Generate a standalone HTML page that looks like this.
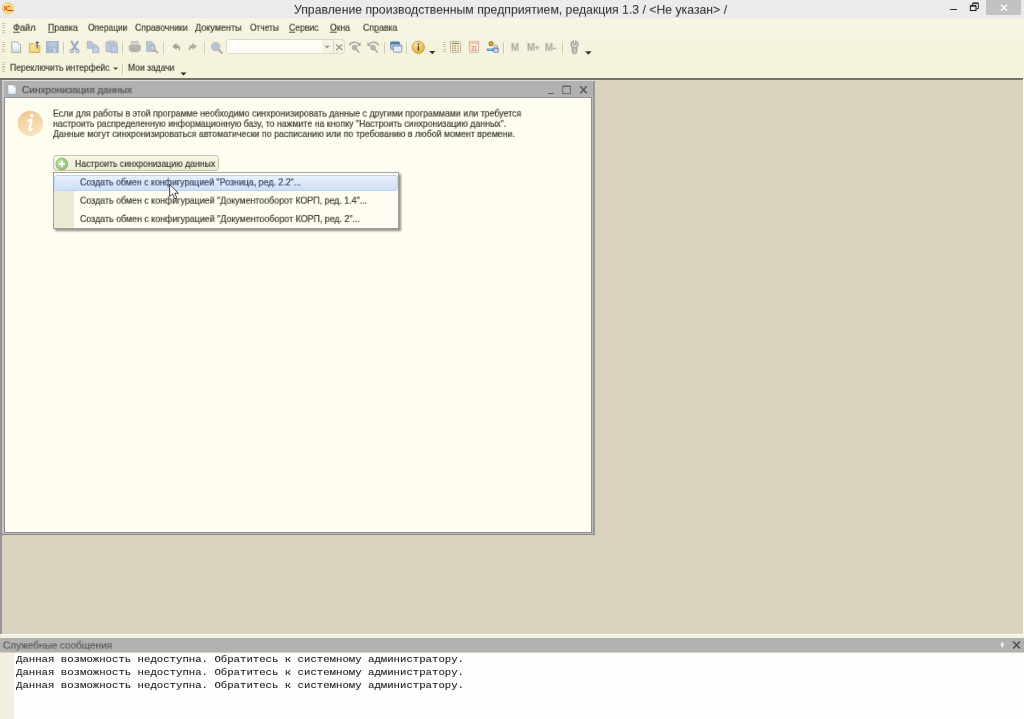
<!DOCTYPE html>
<html lang="ru">
<head>
<meta charset="utf-8">
<title>1C</title>
<style>
*{box-sizing:border-box;margin:0;padding:0}
html,body{width:1024px;height:719px;overflow:hidden}
body{position:relative;background:#d9d3be;font-family:"Liberation Sans",sans-serif}
.a{position:absolute}
.tx{position:absolute;-webkit-text-stroke:0.2px currentColor;will-change:transform;line-height:1;white-space:nowrap;transform-origin:0 0;font-family:"Liberation Sans",sans-serif}
.tx.mono{font-family:"Liberation Mono",monospace;white-space:pre;-webkit-text-stroke:0.1px currentColor}
.tx u{text-decoration:underline;text-underline-offset:1px}
svg{position:absolute;overflow:visible}
.grip{position:absolute;width:3px;height:11px;background:repeating-linear-gradient(to bottom,#cbc6b0 0,#cbc6b0 1.1px,rgba(0,0,0,0) 1.1px,rgba(0,0,0,0) 2.2px)}
.sep{position:absolute;width:1px;height:14.5px;margin-top:-0.5px;background:linear-gradient(rgba(208,203,182,0),#d0cbb6 15%,#d0cbb6 85%,rgba(208,203,182,0));box-shadow:1px 0 0 rgba(252,250,240,.7)}

</style>
</head>
<body>
<!-- window title bar -->
<div class="a" style="left:0;top:0;width:1024px;height:18px;background:#ebebeb"></div>
<div class="a" style="left:0;top:17px;width:1024px;height:1px;background:#e6e6e3"></div>
<div class="a" style="left:985.7px;top:0;width:35.8px;height:14.7px;background:#c2c2c2"></div>
<div class="a" style="left:950px;top:8.8px;width:7px;height:1.7px;background:#2a2a2a"></div>
<!-- toolbars -->
<div class="a" style="left:0;top:18px;width:1024px;height:61px;background:linear-gradient(#f7f5e4,#f5f2de 40%)"></div>
<div class="a" style="left:0;top:78.4px;width:1022.6px;height:1.6px;background:#74726b"></div>
<div class="grip" style="left:2px;top:23px"></div>
<div class="grip" style="left:2px;top:41.5px"></div>
<div class="grip" style="left:2px;top:62px"></div>
<div class="grip" style="left:442.5px;top:41.5px"></div>
<div class="sep" style="left:63px;top:41px"></div>
<div class="sep" style="left:122px;top:41px"></div>
<div class="sep" style="left:163px;top:41px"></div>
<div class="sep" style="left:204px;top:41px"></div>
<div class="sep" style="left:384px;top:41px"></div>
<div class="sep" style="left:406px;top:41px"></div>
<div class="sep" style="left:503px;top:41px"></div>
<div class="sep" style="left:562px;top:41px"></div>
<div class="sep" style="left:122px;top:62px"></div>
<!-- search box -->
<div class="a" style="left:225.5px;top:38.9px;width:119.8px;height:15.2px;border:1px solid #dedac6;border-radius:3px;background:#f7f3e2"></div>
<div class="a" style="left:226.5px;top:39.9px;width:95px;height:13.2px;border-radius:2px 0 0 2px;background:#fffdf6"></div>
<div class="a" style="left:333px;top:39.9px;width:1px;height:13.2px;background:#ddd8c4"></div>
<!-- MDI area -->
<div class="a" style="left:0;top:80px;width:1024px;height:554px;background:#d9d3be"></div>
<div class="a" style="left:0;top:80px;width:1.8px;height:554px;background:#949494"></div>
<!-- child window -->
<div class="a" style="left:1.8px;top:80px;width:592.9px;height:454.8px;background:#b1b1b1"></div>
<div class="a" style="left:1.8px;top:80px;width:592.9px;height:1px;background:#dcdcdc"></div>
<div class="a" style="left:1.8px;top:81px;width:1.9px;height:452.8px;background:#c5c5c5"></div>
<div class="a" style="left:3.7px;top:96.7px;width:1.3px;height:436px;background:#8c8c8c"></div>
<div class="a" style="left:3.7px;top:96.7px;width:588px;height:1.1px;background:#969696"></div>
<div class="a" style="left:590.7px;top:96.7px;width:1.1px;height:436px;background:#8e8e8e"></div>
<div class="a" style="left:591.8px;top:97px;width:1.4px;height:436.8px;background:#b9b9b9"></div>
<div class="a" style="left:593.2px;top:81px;width:1.5px;height:453.8px;background:#9a9a96"></div>
<div class="a" style="left:3.7px;top:531.8px;width:588px;height:1px;background:#8a8a8a"></div>
<div class="a" style="left:1.8px;top:532.8px;width:591.4px;height:1px;background:#c0c0c0"></div>
<div class="a" style="left:1.8px;top:533.8px;width:592.9px;height:1px;background:#86857d"></div>
<div class="a" style="left:5px;top:97.8px;width:585.7px;height:434px;background:#fffcf1;border-top:1px solid #fffefb;border-left:1px solid #fffefb;border-bottom:1px solid #fffefb"></div>
<!-- button -->
<div class="a" style="left:53px;top:155.2px;width:165.5px;height:16px;border:1px solid #c9c4a8;border-radius:3px;background:linear-gradient(#f9f6e6,#efead3)"></div>
<!-- popup -->
<div class="a" style="left:53px;top:172.4px;width:346px;height:56.2px;background:#fffcf2;border:1px solid #a3a29a;box-shadow:1.5px 1.5px 2px rgba(60,60,50,.55)"></div>
<div class="a" style="left:54px;top:190.4px;width:19.5px;height:37.2px;background:#ede8d2"></div>
<div class="a" style="left:54px;top:175px;width:343.5px;height:15.5px;border:1px solid #bfd4f0;border-radius:2.5px;background:linear-gradient(#e9f1fc,#cddff7)"></div>
<!-- messages -->
<div class="a" style="left:1022.6px;top:79px;width:1.4px;height:556px;background:#fdfdf7"></div>
<div class="a" style="left:0;top:633.7px;width:1024px;height:1.2px;background:#fdfdf6"></div>
<div class="a" style="left:0;top:634.8px;width:1024px;height:3.4px;background:#f4f2df"></div>
<div class="a" style="left:0;top:638.1px;width:1024px;height:14.4px;background:#b1b1b1"></div>
<div class="a" style="left:0;top:652.5px;width:1024px;height:66.5px;background:#fefefe"></div>
<div class="a" style="left:0;top:652.5px;width:14.2px;height:66.5px;background:#f3f0e0"></div>

<!-- 1C logo -->
<svg style="left:0;top:0" width="20" height="18" viewBox="0 0 20 18">
<defs><radialGradient id="lg" cx="0.42" cy="0.36" r="0.62"><stop offset="0" stop-color="#fff3b8"/><stop offset="0.6" stop-color="#fbd868"/><stop offset="1" stop-color="#f4d982"/></radialGradient></defs>
<circle cx="8" cy="8.4" r="5.9" fill="url(#lg)" stroke="#e6d7a8" stroke-width="0.8"/>
<path d="M3.7 7.5 L4.5 6 H5.5 V10.6 H4.3 V7.5 Z" fill="#c8620f"/>
<path d="M10 7.1 A2 2.1 0 1 0 8.5 10.4 L13.4 10.4" fill="none" stroke="#d63a10" stroke-width="1.05"/>
</svg>
<!-- window controls -->
<svg style="left:968px;top:1px" width="14" height="12" viewBox="0 0 14 12">
<path d="M4.6 4.6 V2.4 H10.4 V7.6 H8.2" fill="none" stroke="#333" stroke-width="1"/>
<path d="M4.6 2.1 H10.4" stroke="#333" stroke-width="1.4"/>
<rect x="2.4" y="4.9" width="5.6" height="4.6" fill="none" stroke="#222" stroke-width="1.1"/>
<path d="M2.4 4.7 H8" stroke="#222" stroke-width="1.5"/>
</svg>
<svg style="left:1000px;top:4px" width="9" height="8" viewBox="0 0 9 8">
<path d="M1 0.7 L7 6.7 M7 0.7 L1 6.7" stroke="#fff" stroke-width="1.3" fill="none"/>
</svg>

<!-- toolbar row 2 -->
<!-- new -->
<svg style="left:10px;top:40px" width="13" height="14" viewBox="0 0 13 14">
<defs><linearGradient id="nd" x1="0" y1="0" x2="0" y2="1"><stop offset="0.2" stop-color="#ffffff"/><stop offset="1" stop-color="#c9dcee"/></linearGradient></defs>
<path d="M1.8 2 H8 L10.6 4.6 V12.4 H1.8 Z" fill="url(#nd)" stroke="#a9aaa8" stroke-width="1"/>
<path d="M8 2 V4.6 H10.6" fill="#eef2f6" stroke="#b9bbbb" stroke-width="0.8"/>
</svg>
<!-- open -->
<svg style="left:28px;top:40px" width="14" height="14" viewBox="0 0 14 14">
<defs><linearGradient id="fo" x1="0" y1="0" x2="0" y2="1"><stop offset="0" stop-color="#f9e8a6"/><stop offset="1" stop-color="#f2d16c"/></linearGradient></defs>
<path d="M1.4 3.6 H5.6 L7.4 5.6 H11.8 V12.5 H1.4 Z" fill="url(#fo)" stroke="#cfae55" stroke-width="0.9"/>
<path d="M9.2 8.4 V2.6" stroke="#5f6e68" stroke-width="1.3"/>
<path d="M6.9 3.3 L9.2 0.9 L11.5 3.3 Z" fill="#55645f"/>
</svg>
<!-- save (disabled) -->
<svg style="left:46px;top:40px" width="14" height="14" viewBox="0 0 14 14">
<rect x="0.6" y="1.5" width="11.6" height="11.2" fill="#a9b8cf" stroke="#9eaec7" stroke-width="0.8"/>
<rect x="2.6" y="2" width="7.6" height="4.6" fill="#b7c7d8"/>
<rect x="3.4" y="8.2" width="6.6" height="4.2" fill="#c6cfdc"/>
<rect x="4.4" y="9.2" width="2" height="2.6" fill="#8f9fb8"/>
</svg>
<!-- cut -->
<svg style="left:69px;top:40px" width="12" height="14" viewBox="0 0 12 14">
<path d="M2.7 1.8 L7.6 9.6 M8.7 1.8 L3.8 9.6" stroke="#a3aec2" stroke-width="2.3" fill="none" stroke-linecap="round"/>
<rect x="1.5" y="9.4" width="2.8" height="3.2" rx="0.9" fill="#dfe1de" stroke="#a3aec2" stroke-width="1.2"/>
<rect x="7.1" y="9.4" width="2.8" height="3.2" rx="0.9" fill="#dfe1de" stroke="#a3aec2" stroke-width="1.2"/>
</svg>
<!-- copy -->
<svg style="left:86px;top:40px" width="14" height="14" viewBox="0 0 14 14">
<path d="M1.3 1.3 H5 L7.2 3.5 V8.3 H1.3 Z" fill="#b9c5d7" stroke="#a8b4c8" stroke-width="0.9"/>
<path d="M6.6 5 H10.4 L12.8 7.4 V12.6 H6.6 Z" fill="#b9c5d7" stroke="#a8b4c8" stroke-width="0.9"/>
<rect x="8" y="8" width="3.4" height="3.4" fill="#c5d4e6"/>
</svg>
<!-- paste -->
<svg style="left:105px;top:40px" width="14" height="14" viewBox="0 0 14 14">
<rect x="1.1" y="1.9" width="10.6" height="9.8" rx="0.8" fill="#bcc7d8" stroke="#a9b4c6" stroke-width="0.9"/>
<rect x="4.2" y="1" width="4.6" height="2.2" fill="#d6d8d2" stroke="#a9b0b8" stroke-width="0.7"/>
<rect x="6" y="5.9" width="6.6" height="6.8" fill="#bccbe0" stroke="#a9b4c6" stroke-width="0.9"/>
</svg>
<!-- print -->
<svg style="left:128px;top:40px" width="14" height="14" viewBox="0 0 14 14">
<rect x="3.6" y="1.6" width="6.6" height="4.4" fill="#cfd3d6" stroke="#b9bab4" stroke-width="0.7"/>
<rect x="0.9" y="4.8" width="12" height="6.2" rx="1.6" fill="#b7b5aa"/>
<rect x="3.2" y="8.6" width="7.4" height="3.2" fill="#c9c7bc" stroke="#a9a79c" stroke-width="0.7"/>
<rect x="4.4" y="9.6" width="5" height="1" fill="#98968c"/>
</svg>
<!-- preview -->
<svg style="left:145px;top:40px" width="15" height="14" viewBox="0 0 15 14">
<path d="M1.5 1.6 H6.8 L9.4 4.2 V11.5 H1.5 Z" fill="#b7c6d8" stroke="#a9b7ca" stroke-width="0.8"/>
<circle cx="7.6" cy="7.9" r="2.7" fill="#c3d2e4" stroke="#aaa89e" stroke-width="1"/>
<path d="M9.6 9.9 L12.6 12.6" stroke="#b5ab9c" stroke-width="1.7" stroke-linecap="round"/>
</svg>
<!-- undo -->
<svg style="left:171px;top:41px" width="11" height="12" viewBox="0 0 11 12">
<path d="M1.2 5.4 L5.6 1.8 V4 C8.6 4 9.8 6.6 9 10.6 C8.4 8 7.4 6.9 5.6 6.9 V9 Z" fill="#9dab96"/>
</svg>
<!-- redo -->
<svg style="left:187px;top:41px" width="11" height="12" viewBox="0 0 11 12">
<path d="M9.8 5.4 L5.4 1.8 V4 C2.4 4 1.2 6.6 2 10.6 C2.6 8 3.6 6.9 5.4 6.9 V9 Z" fill="#a7b3a0"/>
</svg>
<!-- search magnifier -->
<svg style="left:210px;top:41px" width="14" height="14" viewBox="0 0 14 14">
<circle cx="5.6" cy="5.6" r="4.2" fill="#b6c3d8" stroke="#b4b8bc" stroke-width="0.9"/>
<path d="M8.8 8.8 L12 12" stroke="#b8ae9e" stroke-width="2" stroke-linecap="round"/>
</svg>
<!-- search dropdown + clear -->
<svg style="left:322px;top:41px" width="22" height="12" viewBox="0 0 22 12">
<path d="M2.4 4.8 H7.8 L5.1 7.5 Z" fill="#98958a"/>
<path d="M14.2 3.4 L20.2 9 M20.2 3.4 L14.2 9" stroke="#9b988e" stroke-width="1.35" fill="none"/>
</svg>
<!-- find next -->
<svg style="left:348px;top:40px" width="14" height="14" viewBox="0 0 14 14">
<path d="M1.4 5.4 C3 1.6 9 1.2 11.4 4.6" fill="none" stroke="#a9a9a1" stroke-width="1.5"/>
<path d="M12.6 2.2 V6 H8.8 Z" fill="#a9a9a1"/>
<circle cx="6.6" cy="7.6" r="2.3" fill="#b9b9b4" stroke="#a6a6a0" stroke-width="1"/>
<path d="M8.4 9.4 L10.8 12" stroke="#b0aa9c" stroke-width="1.7" stroke-linecap="round"/>
</svg>
<!-- find prev -->
<svg style="left:366px;top:40px" width="14" height="14" viewBox="0 0 14 14">
<path d="M12.6 5.4 C11 1.6 5 1.2 2.6 4.6" fill="none" stroke="#a9a9a1" stroke-width="1.5"/>
<path d="M1.4 2.2 V6 H5.2 Z" fill="#a9a9a1"/>
<circle cx="7" cy="7.6" r="2.3" fill="#b9b9b4" stroke="#a6a6a0" stroke-width="1"/>
<path d="M8.8 9.4 L11.2 12" stroke="#b0aa9c" stroke-width="1.7" stroke-linecap="round"/>
</svg>
<!-- windows -->
<svg style="left:389px;top:40px" width="14" height="14" viewBox="0 0 14 14">
<rect x="1.6" y="1.9" width="9" height="7.4" rx="0.8" fill="#a9bcd6" stroke="#6f8cb3" stroke-width="0.9"/>
<rect x="1.6" y="1.9" width="9" height="2.2" fill="#557aa8"/>
<rect x="4.4" y="5" width="8.4" height="7.2" rx="0.8" fill="#e3ebf5" stroke="#7c97bc" stroke-width="0.9"/>
<rect x="4.6" y="5" width="8" height="1.6" fill="#8fa9cb"/>
</svg>
<!-- info -->
<svg style="left:411px;top:40px" width="15" height="15" viewBox="0 0 15 15">
<defs><radialGradient id="ig" cx="0.4" cy="0.3" r="0.8"><stop offset="0" stop-color="#fbe9b4"/><stop offset="0.6" stop-color="#f0bb5a"/><stop offset="1" stop-color="#e09c36"/></radialGradient></defs>
<circle cx="7.3" cy="7.3" r="6.2" fill="url(#ig)" stroke="#cf9740" stroke-width="0.8"/>
<rect x="6.6" y="5.7" width="1.5" height="5" fill="#4a5420"/>
<rect x="6.6" y="3.3" width="1.5" height="1.6" fill="#4a5420"/>
</svg>
<svg style="left:429px;top:50px" width="7" height="5" viewBox="0 0 7 5"><path d="M0.2 0.9 H6.4 L3.3 4.2 Z" fill="#3a3222"/></svg>
<!-- calculator -->
<svg style="left:449px;top:40px" width="13" height="14" viewBox="0 0 13 14">
<rect x="1.5" y="1.4" width="10" height="11" rx="0.8" fill="#f8f0dc" stroke="#b9b19c" stroke-width="0.9"/>
<rect x="3" y="2.8" width="7" height="1.3" fill="#7c9c46"/>
<g fill="#6b7240"><rect x="3.2" y="5.4" width="1.2" height="1.1"/><rect x="5.6" y="5.4" width="1.2" height="1.1"/><rect x="3.2" y="7.6" width="1.2" height="1.1"/><rect x="5.6" y="7.6" width="1.2" height="1.1"/><rect x="3.2" y="9.8" width="1.2" height="1.1"/><rect x="5.6" y="9.8" width="1.2" height="1.1"/></g>
<g fill="#d99a58"><rect x="7.8" y="5.5" width="2.2" height="0.9"/><rect x="7.8" y="7.7" width="2.2" height="0.9"/><rect x="7.8" y="9.9" width="2.2" height="0.9"/></g>
</svg>
<!-- calendar -->
<svg style="left:468px;top:40px" width="12" height="14" viewBox="0 0 12 14">
<rect x="1.4" y="1.4" width="9.2" height="11" rx="0.6" fill="#fbe9dd" stroke="#cbb09a" stroke-width="0.9"/>
<rect x="1.8" y="1.8" width="8.4" height="1.9" fill="#e9b98c"/>
<rect x="3.2" y="1.6" width="1" height="1.5" fill="#fff"/><rect x="5.5" y="1.6" width="1" height="1.5" fill="#fff"/><rect x="7.8" y="1.6" width="1" height="1.5" fill="#fff"/>
<text x="2.9" y="10.7" font-family="Liberation Sans, sans-serif" font-size="7.4" textLength="6.2" lengthAdjust="spacingAndGlyphs" fill="#e2603c">31</text>
</svg>
<!-- user + lock -->
<svg style="left:486px;top:40px" width="14" height="14" viewBox="0 0 14 14">
<circle cx="5.1" cy="3.7" r="2.2" fill="#dda136" stroke="#8f6f28" stroke-width="0.9"/>
<rect x="0.9" y="8.4" width="6.6" height="2.5" rx="0.8" fill="#3b8fd6"/>
<rect x="2.6" y="8.9" width="3" height="1.1" fill="#a8d4f2"/>
<path d="M8.3 8 V6.9 A1.6 1.6 0 0 1 11.5 6.9 V8" fill="none" stroke="#98a4b2" stroke-width="1.1"/>
<rect x="7.3" y="7.8" width="5.1" height="4.7" rx="0.7" fill="#8d9bab" stroke="#7f8c9c" stroke-width="0.6"/>
<path d="M9 12 V9.8 H10.8 V12" fill="none" stroke="#fff" stroke-width="0.9"/>
</svg>
<!-- M, M+, M- -->
<div class="tx" style="left:510.6px;top:42.6px;font-size:10px;font-weight:bold;color:#b3ad9f;transform:scaleX(0.95)">M</div>
<div class="tx" style="left:526.8px;top:42.6px;font-size:10px;font-weight:bold;color:#b3ad9f;transform:scaleX(0.95)">M<span style="font-size:8.5px;position:relative;top:-0.3px">+</span></div>
<div class="tx" style="left:545.3px;top:42.6px;font-size:10px;font-weight:bold;color:#b3ad9f;transform:scaleX(0.95)">M<span style="position:relative;top:-0.5px">-</span></div>
<!-- wrench -->
<svg style="left:569px;top:40px" width="11" height="15" viewBox="0 0 11 15">
<rect x="3.2" y="5.6" width="4.6" height="8" rx="2.2" fill="#d9d9d2" stroke="#8d8d86" stroke-width="0.95"/>
<path d="M4.3 0.9 A3.7 3.7 0 1 0 6.7 0.9 V4.2 H4.3 Z" fill="#cfcfc8" stroke="#92928b" stroke-width="0.95" stroke-linejoin="round"/>
<rect x="5" y="8" width="1" height="4" rx="0.5" fill="#f5f2de" stroke="#9a9a93" stroke-width="0.6"/>
</svg>
<svg style="left:585px;top:51px" width="7" height="5" viewBox="0 0 7 5"><path d="M0.1 0.3 H6.6 L3.35 3.7 Z" fill="#3a3222"/></svg>

<!-- row 3 arrows -->
<svg style="left:113px;top:67px" width="6" height="4" viewBox="0 0 6 4"><path d="M0.3 0.4 H5.1 L2.7 2.9 Z" fill="#4a4638"/></svg>
<svg style="left:180px;top:71.5px" width="7" height="5" viewBox="0 0 7 5"><path d="M0.5 0.6 H6.5 L3.5 3.6 Z" fill="#2e281c"/></svg>

<!-- child window doc icon -->
<svg style="left:7px;top:84px" width="11" height="12" viewBox="0 0 11 12">
<defs><linearGradient id="cd" x1="0" y1="0" x2="0" y2="1"><stop offset="0.3" stop-color="#ffffff"/><stop offset="1" stop-color="#d8e4f0"/></linearGradient></defs>
<path d="M0.8 0.8 H6.6 L9.2 3.2 V10.4 H0.8 Z" fill="url(#cd)" stroke="#a0a5aa" stroke-width="0.9"/>
<path d="M6.6 0.8 V3.2 H9.2" fill="#e6ebf0" stroke="#c4c8cc" stroke-width="0.6"/>
</svg>
<!-- child window controls -->
<div class="a" style="left:548px;top:93px;width:6px;height:1.3px;background:#5e5e5e"></div>
<svg style="left:561px;top:85px" width="11" height="10" viewBox="0 0 11 10">
<rect x="1.7" y="1.4" width="7.8" height="7.2" fill="none" stroke="#6b6b6b" stroke-width="0.9"/>
<path d="M1.7 1.3 H9.5" stroke="#606060" stroke-width="1.3"/>
</svg>
<svg style="left:579px;top:85px" width="9" height="10" viewBox="0 0 9 10">
<path d="M1.3 1.2 L7.7 8.2 M7.7 1.2 L1.3 8.2" stroke="#555" stroke-width="1.45" fill="none"/>
</svg>

<!-- big info -->
<svg style="left:17px;top:110px" width="27" height="27" viewBox="0 0 27 27">
<defs><linearGradient id="bi" x1="0" y1="0" x2="0.3" y2="1"><stop offset="0" stop-color="#f0c98e"/><stop offset="1" stop-color="#f7e2bd"/></linearGradient></defs>
<circle cx="13.3" cy="13.4" r="12.6" fill="url(#bi)"/>
<path d="M11.6 10.6 C12.6 10 13.6 10 14.4 10.2 L12.5 18.6 C12.3 19.9 13.4 20 14.6 19" fill="none" stroke="#fffdf6" stroke-width="2.5" stroke-linecap="round" stroke-linejoin="round"/>
<circle cx="14.7" cy="5.8" r="1.8" fill="#fffdf6"/>
</svg>
<!-- green plus -->
<svg style="left:54.5px;top:157px" width="14" height="14" viewBox="0 0 14 14">
<defs><radialGradient id="gp" cx="0.4" cy="0.35" r="0.75"><stop offset="0" stop-color="#c9e6b2"/><stop offset="1" stop-color="#7fba68"/></radialGradient></defs>
<circle cx="6.8" cy="7" r="5.9" fill="url(#gp)" stroke="#8fb77b" stroke-width="0.9"/>
<path d="M6.8 3.7 V10.3 M3.5 7 H10.1" stroke="#ffffff" stroke-width="1.6"/>
</svg>

<!-- mouse cursor -->
<svg style="left:167.6px;top:183.3px" width="14" height="18.6" viewBox="0 0 12 16">
<path d="M1.4 1.2 V11.6 L3.8 9.4 L5.8 13.6 L7.6 12.8 L5.7 8.8 H9 Z" fill="#fdfdfd" stroke="#3a3f4a" stroke-width="0.85" stroke-linejoin="miter"/>
</svg>

<!-- message panel pin + close -->
<svg style="left:1000px;top:641px" width="5" height="8" viewBox="0 0 5 8">
<ellipse cx="2.3" cy="3.4" rx="1.5" ry="2.5" fill="#ececec"/><rect x="2" y="5" width="0.8" height="2" fill="#e0e0e0"/>
</svg>
<svg style="left:1012px;top:640px" width="10" height="10" viewBox="0 0 10 10">
<path d="M1.1 1.5 L8 8.6 M8 1.5 L1.1 8.6" stroke="#4b4b4b" stroke-width="1.4" fill="none"/>
</svg>

<div id="title" class="tx" style="left:294.0px;top:4px;font-size:12px;color:#333333;transform:translateY(0.03px) scale(1.0196,0.967);-webkit-text-stroke:0.05px currentColor">Управление производственным предприятием, редакция 1.3 / &lt;Не указан&gt; /</div>
<div id="m1" class="tx" style="left:12.7px;top:23px;font-size:10.1px;color:#3e3a2c;transform:translateY(0.68px) scale(0.9057,0.89);"><u>Ф</u>айл</div>
<div id="m2" class="tx" style="left:47.9px;top:23px;font-size:10.1px;color:#3e3a2c;transform:translateY(0.68px) scale(0.8737,0.89);"><u>П</u>равка</div>
<div id="m3" class="tx" style="left:87.9px;top:23px;font-size:10.1px;color:#3e3a2c;transform:translateY(0.68px) scale(0.8344,0.89);">Операции</div>
<div id="m4" class="tx" style="left:134.8px;top:23px;font-size:10.1px;color:#3e3a2c;transform:translateY(0.68px) scale(0.8617,0.89);">Справочники</div>
<div id="m5" class="tx" style="left:195.4px;top:23px;font-size:10.1px;color:#3e3a2c;transform:translateY(0.68px) scale(0.8953,0.89);"><u>Д</u>окументы</div>
<div id="m6" class="tx" style="left:249.7px;top:23px;font-size:10.1px;color:#3e3a2c;transform:translateY(0.68px) scale(0.8254,0.89);">Отчеты</div>
<div id="m7" class="tx" style="left:288.8px;top:23px;font-size:10.1px;color:#3e3a2c;transform:translateY(0.68px) scale(0.8531,0.89);"><u>С</u>ервис</div>
<div id="m8" class="tx" style="left:330.1px;top:23px;font-size:10.1px;color:#3e3a2c;transform:translateY(0.68px) scale(0.8522,0.89);"><u>О</u>кна</div>
<div id="m9" class="tx" style="left:363.0px;top:23px;font-size:10.1px;color:#3e3a2c;transform:translateY(0.68px) scale(0.8656,0.89);">Сп<u>р</u>авка</div>
<div id="r1" class="tx" style="left:9.8px;top:63px;font-size:10.1px;color:#3e3a2c;transform:translateY(0.68px) scale(0.8513,0.89);">Переключить интерфейс</div>
<div id="r2" class="tx" style="left:128.0px;top:63px;font-size:10.1px;color:#3e3a2c;transform:translateY(0.68px) scale(0.8436,0.89);">Мои задачи</div>
<div id="ct" class="tx" style="left:21.9px;top:86px;font-size:10.1px;color:#5a5a5a;transform:translateY(0.08px) scale(0.9930,0.89);text-shadow:0 0 1px #888">Синхронизация данных</div>
<div id="p1" class="tx" style="left:53.1px;top:109px;font-size:10.1px;color:#3e3a2c;transform:translateY(0.48px) scale(0.8719,0.89);">Если для работы в этой программе необходимо синхронизировать данные с другими программами или требуется</div>
<div id="p2" class="tx" style="left:53.1px;top:119px;font-size:10.1px;color:#3e3a2c;transform:translateY(0.73px) scale(0.8696,0.89);">настроить распределенную информационную базу, то нажмите на кнопку "Настроить синхронизацию данных".</div>
<div id="p3" class="tx" style="left:53.1px;top:129px;font-size:10.1px;color:#3e3a2c;transform:translateY(0.98px) scale(0.8732,0.89);">Данные могут синхронизироваться автоматически по расписанию или по требованию в любой момент времени.</div>
<div id="bt" class="tx" style="left:74.6px;top:159px;font-size:10.1px;color:#3e3a2c;transform:translateY(0.78px) scale(0.8608,0.89);">Настроить синхронизацию данных</div>
<div id="i1" class="tx" style="left:79.7px;top:178px;font-size:10.1px;color:#3a4260;transform:translateY(0.28px) scale(0.8744,0.89);">Создать обмен с конфигурацией "Розница, ред. 2.2"...</div>
<div id="i2" class="tx" style="left:79.7px;top:196px;font-size:10.1px;color:#3e3a2c;transform:translateY(0.58px) scale(0.8776,0.89);">Создать обмен с конфигурацией "Документооборот КОРП, ред. 1.4"...</div>
<div id="i3" class="tx" style="left:79.7px;top:214px;font-size:10.1px;color:#3e3a2c;transform:translateY(0.98px) scale(0.8785,0.89);">Создать обмен с конфигурацией "Документооборот КОРП, ред. 2"...</div>
<div id="mh" class="tx" style="left:3.1px;top:641px;font-size:10.1px;color:#5c5c5c;transform:translateY(0.48px) scale(0.9893,0.89);">Служебные сообщения</div>
<div id="l1" class="tx mono" style="left:16.0px;top:655.32px;font-size:9.5px;color:#1a1a1a;transform:scaleX(1.1226);">Данная возможность недоступна. Обратитесь к системному администратору.</div>
<div id="l2" class="tx mono" style="left:16.0px;top:668.12px;font-size:9.5px;color:#1a1a1a;transform:scaleX(1.1226);">Данная возможность недоступна. Обратитесь к системному администратору.</div>
<div id="l3" class="tx mono" style="left:16.0px;top:680.92px;font-size:9.5px;color:#1a1a1a;transform:scaleX(1.1226);">Данная возможность недоступна. Обратитесь к системному администратору.</div>
</body>
</html>
